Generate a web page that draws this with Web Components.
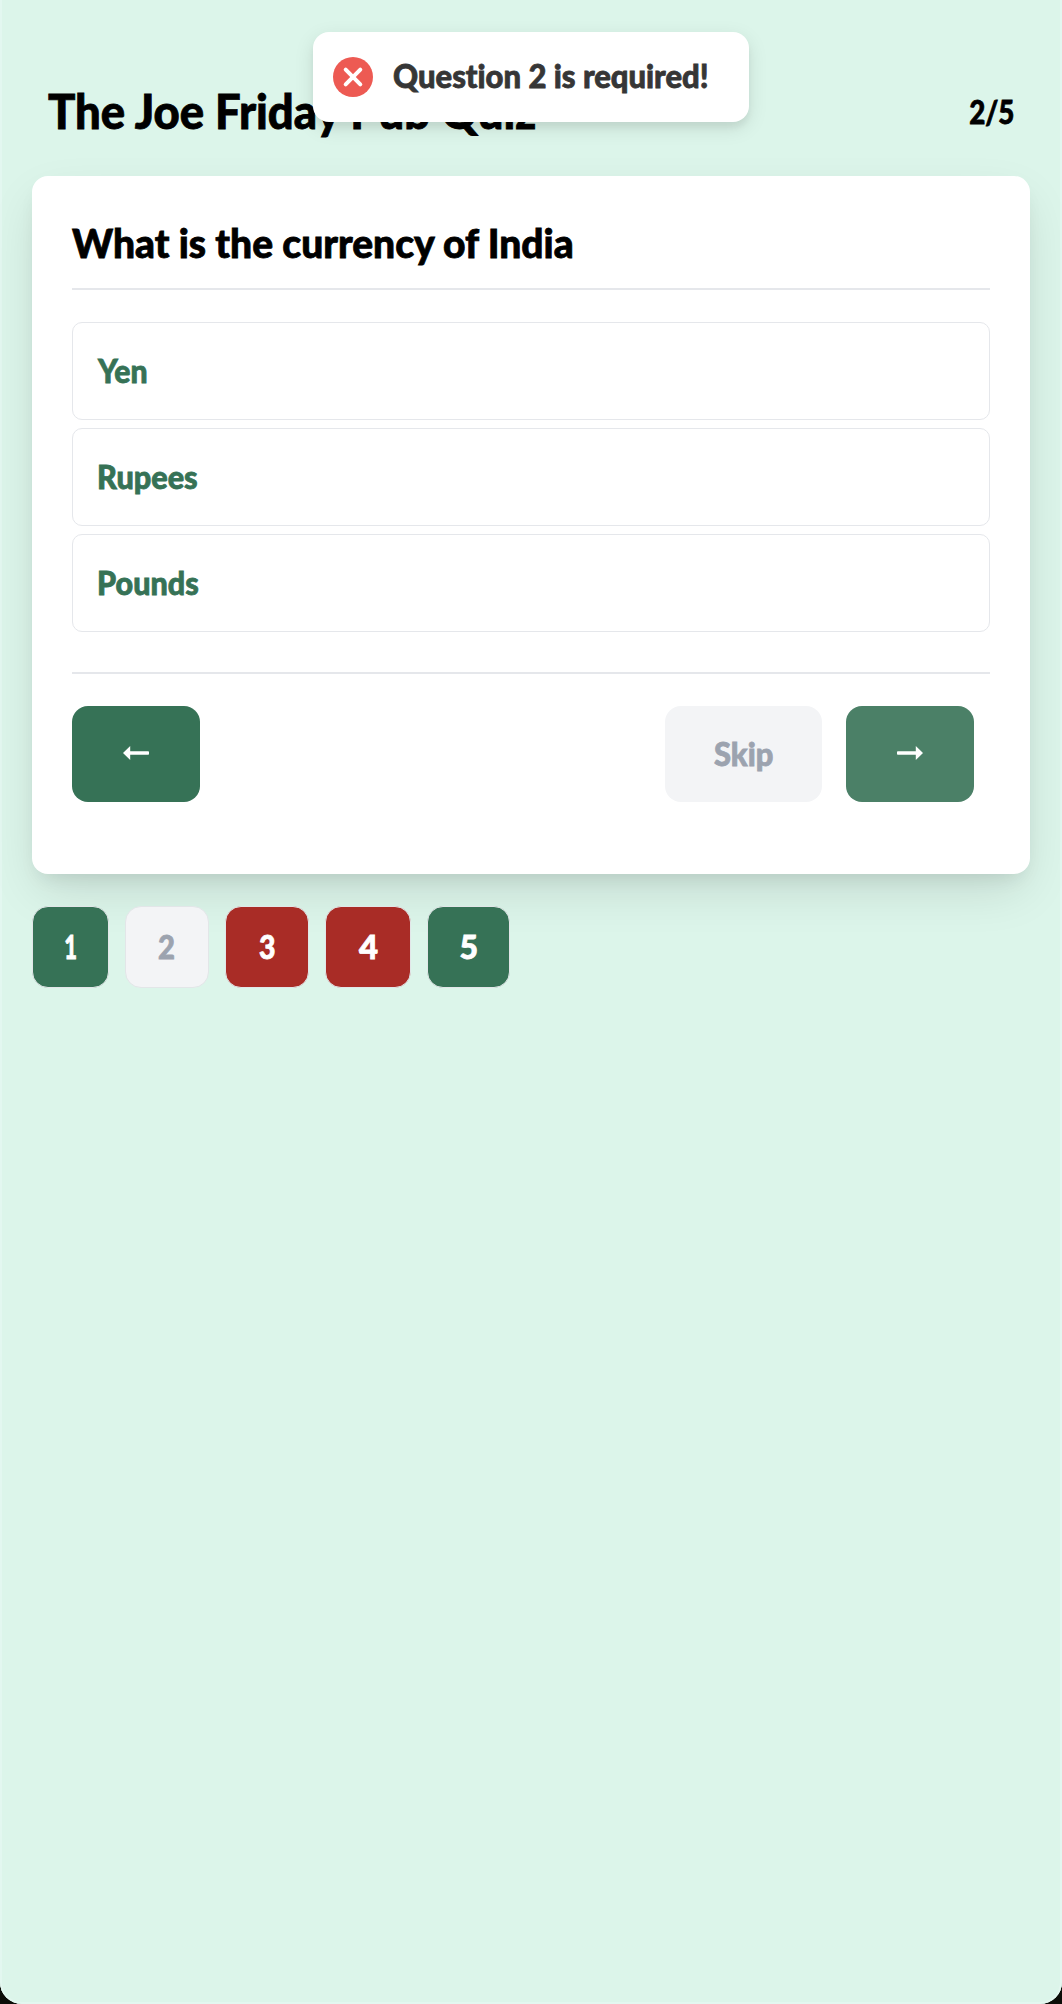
<!DOCTYPE html>
<html lang="en">
<head>
<meta charset="utf-8">
<title>The Joe Friday Pub Quiz</title>
<style>
html{background:#0c0d08}
body{margin:0;font-family:Lato,"Open Sans",sans-serif;font-weight:900;color:#000}
</style>
</head>
<body>
<quiz-app></quiz-app>
<script>
const define = (name, html, setup) => {
  const t = document.createElement('template');
  t.innerHTML = html;
  customElements.define(name, class extends HTMLElement {
    connectedCallback() {
      if (this.shadowRoot) return;
      this.attachShadow({mode: 'open'}).append(t.content.cloneNode(true));
      if (setup) setup(this, this.shadowRoot);
    }
  });
};

/* A label condensed so that its ink spans exactly the "w" attribute. */
const ctx = document.createElement('canvas').getContext('2d');
define('fit-label', `<style>
:host{display:block;flex:none;white-space:nowrap;line-height:1.2;padding-bottom:var(--lift,0px);-webkit-text-stroke:.8px currentColor}
span{display:block;transform-origin:0 50%;width:max-content;font-variant-ligatures:none}
</style><span></span>`, (el, root) => {
  const span = root.querySelector('span'), size = +el.getAttribute('size') || 32, w = +el.getAttribute('w');
  const text = el.getAttribute('text');
  el.style.fontSize = size + 'px';
  el.style.width = w + 'px';
  span.textContent = text;
  ctx.font = '900 ' + size + 'px Lato';
  const m = ctx.measureText(text);
  const s = w / (m.actualBoundingBoxLeft + m.actualBoundingBoxRight);
  span.style.transform = 'translateX(' + m.actualBoundingBoxLeft * s + 'px) scaleX(' + s + ')';
});

define('quiz-header', `<style>
:host{display:flex;justify-content:space-between;align-items:center;height:176px;padding:46px 49px 0 48px;box-sizing:border-box}
.count{padding-top:2px}
</style><fit-label text="The Joe Friday Pub Quiz" size="47" w="490"></fit-label><fit-label class="count" style="padding-top:2px" text="2/5" w="43"></fit-label>`);

define('quiz-card', `<style>
:host{display:flex;flex-direction:column;box-sizing:border-box;height:698px;margin:0 32px;padding:0 40px;background:#fff;border-radius:16px;
box-shadow:0 20px 50px -6px rgba(0,0,0,.12),0 10px 20px -8px rgba(0,0,0,.1)}
header{display:flex;align-items:center;height:114px;padding-top:22px;box-sizing:border-box;border-bottom:2px solid #e5e7eb}
main{display:flex;flex-direction:column;gap:8px;padding:32px 0 40px}
footer{display:flex;border-top:2px solid #e5e7eb;padding:32px 16px 0 0;gap:24px}
footer>:first-child{margin-right:auto}
</style><header><slot name="question"></slot></header><main><slot></slot></main>
<footer><quiz-button><arrow-icon></arrow-icon></quiz-button>
<quiz-button style="--w:157px;--bg:#f3f4f6;--fg:#9ca3af"><fit-label text="Skip" w="59"></fit-label></quiz-button>
<quiz-button style="--bg:#4b8067"><arrow-icon style="transform:scaleX(-1)"></arrow-icon></quiz-button></footer>`);

define('quiz-option', `<style>
:host{display:flex;align-items:center;box-sizing:border-box;height:98px;border:1px solid #e5e7eb;border-radius:10px;padding:0 0 0 var(--x,26px);color:#367256}
</style><slot></slot>`);

define('quiz-button', `<style>
:host{display:block}
button{all:unset;display:flex;align-items:center;justify-content:center;width:var(--w,128px);height:96px;border-radius:16px;background:var(--bg,#367256);color:var(--fg,#fff)}
</style><button><slot></slot></button>`);

define('arrow-icon', `<style>:host{display:block;margin-bottom:2px}svg{display:block}</style>
<svg width="26" height="14" viewBox="0 0 26 14"><path d="M0 7 7.2 0v5.3H25.2q.8 0 .8.8v1.8q0 .8-.8.8H7.2V14z" fill="#fff"/></svg>`);

define('page-chip', `<style>
:host{display:block}
button{all:unset;display:flex;align-items:center;justify-content:center;box-sizing:border-box;width:var(--w);height:82px;border:1px solid #e2e6e8;border-radius:16px;background:var(--bg,#367256);color:var(--fg,#fff)}
</style><button><slot></slot></button>`);

define('quiz-pager', `<style>
:host{display:flex;gap:16px;margin:32px 32px 0}
</style><slot></slot>`);

define('toast-message', `<style>
:host{position:absolute;left:313px;top:32px;width:436px;height:90px;box-sizing:border-box;padding-left:20px;display:flex;align-items:center;gap:21px;
background:#fff;border-radius:16px;color:#363636;box-shadow:0 6px 20px rgba(0,0,0,.1),0 6px 6px rgba(0,0,0,.05)}
svg{display:block;flex:none}
</style><svg width="40" height="40" viewBox="0 0 40 40"><circle cx="20" cy="20" r="20" fill="#ed5a53"/><path d="m12.7 12.7 14.6 14.6m0-14.6L12.7 27.3" stroke="#fff" stroke-width="4" stroke-linecap="round"/></svg><slot></slot>`);

define('quiz-app', `<style>
:host{display:block;position:relative;box-sizing:border-box;height:2004px;background:#dcf5ea;border-radius:0 0 22px 22px;overflow:hidden;box-shadow:inset 2px 0 #e3f7f0,inset -2px 0 #e3f7f0,inset 0 -2px #e3f7f0}
</style>
<quiz-header></quiz-header>
<quiz-card>
<fit-label slot="question" text="What is the currency of India" size="40" w="502"></fit-label>
<quiz-option style="--x:24px"><fit-label text="Yen" w="49.5"></fit-label></quiz-option>
<quiz-option><fit-label text="Rupees" w="98.5"></fit-label></quiz-option>
<quiz-option><fit-label text="Pounds" w="99.5"></fit-label></quiz-option>
</quiz-card>
<quiz-pager>
<page-chip style="--w:77px"><fit-label text="1" w="11"></fit-label></page-chip>
<page-chip style="--w:84px;--bg:#f3f4f6;--fg:#9ca3af"><fit-label text="2" w="15.5"></fit-label></page-chip>
<page-chip style="--w:84px;--bg:#a92c26"><fit-label text="3" w="16"></fit-label></page-chip>
<page-chip style="--w:86px;--bg:#a92c26"><fit-label text="4" w="18.5"></fit-label></page-chip>
<page-chip style="--w:83px"><fit-label text="5" w="16"></fit-label></page-chip>
</quiz-pager>
<toast-message><fit-label style="--lift:1px" text="Question 2 is required!" w="314"></fit-label></toast-message>`);
</script>
</body>
</html>
